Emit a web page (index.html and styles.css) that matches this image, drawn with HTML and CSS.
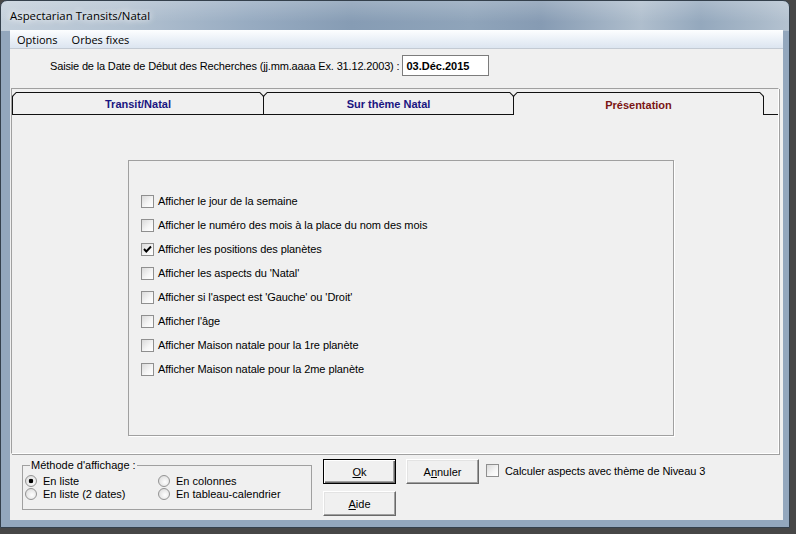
FILE: index.html
```html
<!DOCTYPE html>
<html lang="fr">
<head>
  <meta charset="UTF-8">
  <title>Aspectarian Transits/Natal</title>
  <link rel="stylesheet" href="styles.css">
</head>
<body>
  <div class="window">
    <div class="titlebar">Aspectarian Transits/Natal</div>

    <div class="client">
      <div class="menubar">
        <span class="menu-item">Options</span>
        <span class="menu-item">Orbes fixes</span>
      </div>

      <div class="date-row">
        <label for="date-debut">Saisie de la Date de Début des Recherches (jj.mm.aaaa Ex. 31.12.2003) :</label>
        <input type="text" id="date-debut" class="date-input" value="03.Déc.2015">
      </div>

      <div class="tab-panel">
        <div class="tabs">
          <div class="tab"><div class="tab-face">Transit/Natal</div></div>
          <div class="tab"><div class="tab-face">Sur thème Natal</div></div>
          <div class="tab active"><div class="tab-face">Présentation</div></div>
          <div class="tab-rest"></div>
        </div>

        <div class="tab-page">
          <div class="options-box">
            <div class="check"><span class="box"></span>Afficher le jour de la semaine</div>
            <div class="check"><span class="box"></span>Afficher le numéro des mois à la place du nom des mois</div>
            <div class="check">
              <span class="box"><svg width="11" height="11" viewBox="0 0 11 11"><polyline points="2,5 4.3,7.5 9,2.5" fill="none" stroke="#000" stroke-width="1.9"/></svg></span>Afficher les positions des planètes
            </div>
            <div class="check"><span class="box"></span>Afficher les aspects du 'Natal'</div>
            <div class="check"><span class="box"></span>Afficher si l'aspect est 'Gauche' ou 'Droit'</div>
            <div class="check"><span class="box"></span>Afficher l'âge</div>
            <div class="check"><span class="box"></span>Afficher Maison natale pour la 1re planète</div>
            <div class="check"><span class="box"></span>Afficher Maison natale pour la 2me planète</div>
          </div>
        </div>
      </div>

      <div class="bottom">
        <fieldset class="group">
          <legend>Méthode d'affichage :</legend>
          <div class="radios">
            <div class="radio-item"><span class="radio on"></span>En liste</div>
            <div class="radio-item"><span class="radio"></span>En colonnes</div>
            <div class="radio-item"><span class="radio"></span>En liste (2 dates)</div>
            <div class="radio-item"><span class="radio"></span>En tableau-calendrier</div>
          </div>
        </fieldset>

        <div class="btn-col">
          <button class="btn default"><u>O</u>k</button>
          <button class="btn"><u>A</u>ide</button>
        </div>
        <button class="btn cancel">A<u>n</u>nuler</button>

        <div class="check niveau"><span class="box"></span>Calculer aspects avec thème de Niveau 3</div>
      </div>
    </div>
  </div>
</body>
</html>
```

FILE: styles.css
```css
* {
  box-sizing: border-box;
}

body {
  margin: 0;
  width: 796px;
  height: 534px;
  overflow: hidden;
  background: #474747;
  font-family: "Liberation Sans", Arial, sans-serif;
  font-size: 11px;
  color: #000;
}

.window {
  width: 790px;
  height: 528px;
  border: 1px solid #34404c;
  border-radius: 7px 7px 0 0;
  padding: 0 6px 7px 9px;
  display: flex;
  flex-direction: column;
  background:
    linear-gradient(180deg, rgba(255, 255, 255, 0.2), rgba(255, 255, 255, 0) 70%) top / 100% 30px no-repeat,
    linear-gradient(90deg, #c3cfdb 0, #b3c2d1 120px, #97abc1 250px, #869cb4 350px, #8fa4ba 470px, #869bb3 540px, #afbecd 640px, #94a8bd 700px, #a9b9c9 760px, #b5c3d1 790px) top / 100% 30px no-repeat,
    #93a7bd;
}

.titlebar {
  height: 29px;
  line-height: 29px;
  font-family: "Open Sans", "Noto Sans", sans-serif;
  font-size: 11.4px;
  text-shadow: 0 0 6px #fff, 0 0 10px #fff;
}

.client {
  flex: 1;
  display: flex;
  flex-direction: column;
  background: #f0f0f0;
}

.menubar {
  height: 19px;
  display: flex;
  align-items: center;
  background: linear-gradient(#fdfeff, #eaf0f7 55%, #dce5f0);
  border-bottom: 1px solid #c3cad3;
  font-family: "Open Sans", "Noto Sans", sans-serif;
  font-size: 11px;
}

.menu-item {
  padding: 0 7px;
}

.date-row {
  display: flex;
  align-items: center;
  height: 21px;
  margin: 6px 0 12px;
  padding-left: 40px;
}

.date-row label {
  margin-right: 3px;
  letter-spacing: -0.16px;
}

.date-input {
  width: 87px;
  height: 21px;
  margin: 0;
  padding: 0 3px;
  border: 1px solid #7c7c7c;
  background: #fff;
  font: bold 11px "Liberation Sans", Arial, sans-serif;
  color: #000;
}

.tab-panel {
  height: 366px;
  margin: 0 4px 0 1px;
  padding-top: 3px;
  border: 1px solid #a0a0a0;
  border-right-color: #fff;
  border-bottom-color: #fff;
  box-shadow: 1px 1px 0 #a0a0a0;
  display: flex;
  flex-direction: column;
}

.tabs {
  display: flex;
  height: 23px;
}

.tab {
  width: 252px;
  height: 23px;
  padding: 1px;
  background: #111;
  clip-path: polygon(4px 0, calc(100% - 4px) 0, 100% 4px, 100% 100%, 0 100%, 0 4px);
}

.tab + .tab {
  width: 251px;
  margin-left: -1px;
}

.tab.active {
  padding-bottom: 0;
}

.tab-face {
  height: 100%;
  display: flex;
  align-items: center;
  justify-content: center;
  padding-top: 1px;
  background: #f0f0f0;
  clip-path: polygon(3.4px 0, calc(100% - 3.4px) 0, 100% 3.4px, 100% 100%, 0 100%, 0 3.4px);
  font-weight: bold;
  color: #191580;
}

.tab.active .tab-face {
  color: #7b1414;
}

.tab-rest {
  flex: 1;
  border-bottom: 1px solid #111;
}

.tab-page {
  flex: 1;
  padding: 45px 0 0 116px;
}

.options-box {
  width: 546px;
  height: 276px;
  padding: 28px 0 0 12px;
  border: 1px solid #a0a0a0;
  box-shadow: 1px 1px 0 #fff;
}

.check {
  display: flex;
  align-items: center;
  gap: 4px;
  height: 24px;
  letter-spacing: -0.07px;
}

.box {
  width: 13px;
  height: 13px;
  flex: none;
  display: flex;
  border: 1px solid #8f8f8f;
  background: linear-gradient(135deg, #dadada, #f6f6f6 60%, #fff);
}

.bottom {
  display: flex;
  align-items: flex-start;
  padding: 5px 0 0 12px;
}

.group {
  width: 290px;
  height: 51px;
  margin: 0;
  padding: 0 2px;
  border: 1px solid #a0a0a0;
}

.group legend {
  margin-left: 5px;
  padding: 0 1px;
}

.radios {
  display: grid;
  grid-template-columns: 133px 1fr;
  grid-auto-rows: 13px;
  margin-top: 3px;
}

.radio-item {
  display: flex;
  align-items: center;
  gap: 6px;
}

.radio {
  width: 12px;
  height: 12px;
  flex: none;
  border-radius: 50%;
  border: 1px solid #939393;
  background: radial-gradient(circle at 60% 60%, #fff, #e2e2e2 70%, #cfcfcf);
}

.radio.on {
  background:
    radial-gradient(circle, #000 0 2px, transparent 2.6px),
    radial-gradient(circle at 60% 60%, #fff, #e2e2e2 70%, #cfcfcf);
}

.btn-col {
  display: flex;
  flex-direction: column;
  gap: 7px;
  margin-left: 11px;
}

.btn {
  width: 73px;
  height: 25px;
  margin: 0;
  padding: 0;
  font: 11px "Liberation Sans", Arial, sans-serif;
  color: #000;
  background: #f0f0f0;
  border: 1px solid;
  border-color: #fff #696969 #696969 #fff;
  box-shadow: inset -1px -1px 0 #a0a0a0, inset 1px 1px 0 #e3e3e3;
}

.btn.default {
  border-color: #000;
  box-shadow: inset 1px 1px 0 #fff, inset -1px -1px 0 #696969, inset -2px -2px 0 #a0a0a0;
}

.btn.cancel {
  margin-left: 10px;
}

.niveau {
  height: 13px;
  margin: 5px 0 0 7px;
  gap: 6px;
}
```
